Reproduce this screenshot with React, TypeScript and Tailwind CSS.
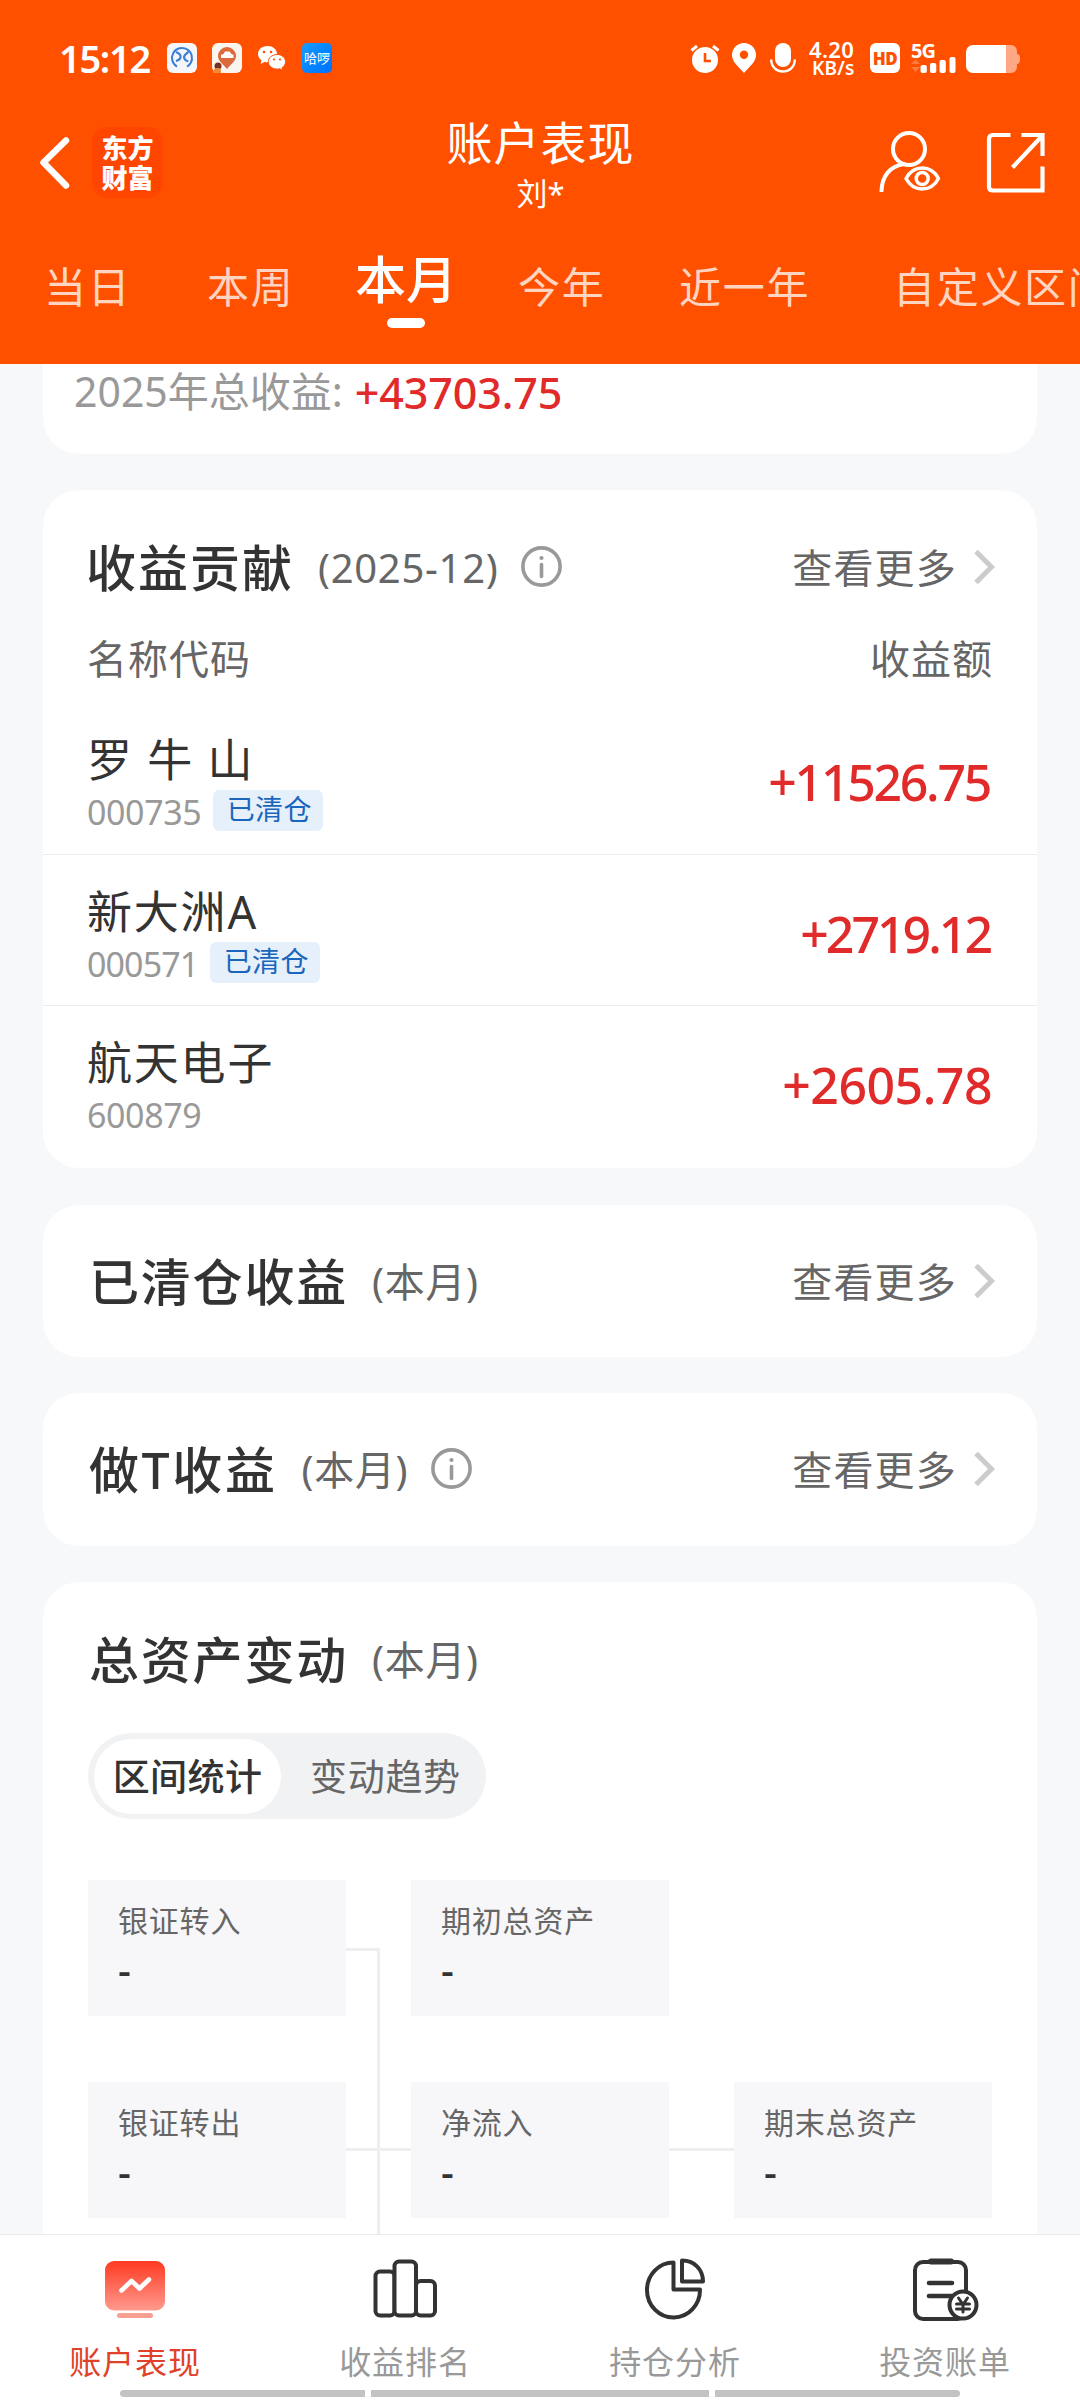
import React from "react";

function Tab({ label, className = "" }: { label: string; className?: string }) {
  return (
    <span className={`shrink-0 whitespace-nowrap text-[42px] leading-none tracking-[1.7px] text-[#ffd5c2] ${className}`}>
      {label}
    </span>
  );
}

function Info({ className = "" }: { className?: string }) {
  return (
    <svg className={`h-[41px] w-[41px] shrink-0 ${className}`} viewBox="0 0 41 41" fill="none" stroke="#999">
      <circle cx="20.5" cy="20.5" r="18.6" strokeWidth="3.6" />
      <path d="M20.5 18.5v12" strokeWidth="3.6" strokeLinecap="round" />
      <circle cx="20.5" cy="12" r="2.1" fill="#999" stroke="none" />
    </svg>
  );
}

function More() {
  return (
    <div className="-mt-[1px] flex items-center">
      <span className="text-[40px] leading-none tracking-[1.2px] text-[#666]">查看更多</span>
      <svg className="-mt-[2px] ml-[16px] h-[36px] w-[24px]" viewBox="0 0 24 36" fill="none" stroke="#ccc" strokeWidth="5">
        <path d="M3 2.5 18.5 18 3 33.5" />
      </svg>
    </div>
  );
}

function Heading({
  title,
  sub,
  info,
  more = true,
  className = "pl-[46px]",
  titleClass = "tracking-[1.8px]",
}: {
  title: string;
  sub: string;
  info?: boolean;
  more?: boolean;
  className?: string;
  titleClass?: string;
}) {
  return (
    <div className={`flex h-[50px] items-center justify-between pr-[40px] ${className}`}>
      <div className="flex items-center">
        <span className={`text-[50px] font-medium leading-none text-[#333] ${titleClass}`}>{title}</span>
        <span className="ml-[24px] text-[40px] leading-none tracking-[0.7px] text-[#666]">{sub}</span>
        {info && <Info className="-mt-[3px] ml-[23px]" />}
      </div>
      {more && <More />}
    </div>
  );
}

function Stock({
  name,
  code,
  cleared,
  amount,
  last,
  codeClass = "tracking-[-0.4px]",
  amountClass,
}: {
  name: string;
  code: string;
  cleared?: boolean;
  amount: string;
  last?: boolean;
  codeClass?: string;
  amountClass: string;
}) {
  return (
    <div className={`flex h-[151.5px] items-start justify-between pl-[44px] pr-[44px] ${last ? "" : "border-b-[1.5px] border-[#ececee]"}`}>
      <div className="pt-[34px]">
        <div className="whitespace-pre text-[45px] leading-none tracking-[1.8px] text-[#333]">{name}</div>
        <div className="mt-[8px] flex h-[41px] items-center">
          <span className={`mt-[3px] text-[34px] leading-none text-[#999] ${codeClass}`}>{code}</span>
          {cleared && (
            <span className="ml-[12px] flex h-[41px] w-[110px] items-center justify-center rounded-[6px] bg-[#e5f0fb] pb-[3px] pl-[2px] text-[28px] leading-none tracking-[0.4px] text-[#1b66bd]">
              已清仓
            </span>
          )}
        </div>
      </div>
      <span className={`mt-[54px] text-[50px] font-medium leading-none text-[#e12a2a] ${amountClass}`}>{amount}</span>
    </div>
  );
}

function Box({ label, className = "" }: { label: string; className?: string }) {
  return (
    <div className={`h-[136px] w-[258px] bg-[#f7f7f9] pl-[30px] pt-[26px] ${className}`}>
      <div className="text-[30px] leading-none tracking-[0.8px] text-[#666]">{label}</div>
      <div className="mt-[14px] text-[40px] font-medium leading-none text-[#333]">-</div>
    </div>
  );
}

function NavItem({ label, active, children }: { label: string; active?: boolean; children: React.ReactNode }) {
  return (
    <div className="flex w-[270px] flex-col items-center pt-[17px]">
      {children}
      <span className={`mt-[18px] text-[32px] leading-none tracking-[0.9px] ${active ? "text-[#e04128]" : "text-[#999]"}`}>{label}</span>
    </div>
  );
}

export default function App() {
  return (
    <div className="flex h-[2400px] w-[1080px] flex-col overflow-hidden bg-[#f7f8fa] font-['Noto_Sans','Noto_Sans_CJK_SC',sans-serif]">
      <header className="h-[364px] shrink-0 bg-[#ff5000] text-white">
        {/* status bar */}
        <div className="flex h-[116px] items-center pl-[59px]">
          <span className="w-[108px] text-[38px] font-semibold leading-none tracking-[-1.3px]">15:12</span>
          <svg className="h-[30px] w-[30px]" viewBox="0 0 30 30" fill="none">
            <rect width="30" height="30" rx="6" fill="#f4f6fb" />
            <circle cx="15" cy="15" r="10" stroke="#3b7fd6" strokeWidth="2" strokeDasharray="52 11" transform="rotate(120 15 15)" />
            <path d="M9 9c4 1.500 5 3.500 4.500 5.500S11 17.500 9 18M21.500 9c-4 2.500-5 4.500-4.200 6.500.6 1.600 2 2.500 4 3" stroke="#3b7fd6" strokeWidth="2.200" />
          </svg>
          <svg className="ml-[15px] h-[30px] w-[30px]" viewBox="0 0 30 30">
            <rect width="30" height="30" rx="6" fill="#fbf5f0" />
            <path d="M15 4a9 9 0 0 0-9 9c0 5 5 8 9 13 4-5 9-8 9-13a9 9 0 0 0-9-9Z" fill="#dd6a3c" />
            <path d="M9 15v-3l2.500-1L13 8.500h4.500l2 2.500 2 1v3Z" fill="#fff" />
            <circle cx="6" cy="23" r="3.500" fill="#7a3320" />
            <path d="M1 30c0-4 2-5 5-5s3 2 3 5Z" fill="#ee8a3a" />
          </svg>
          <svg className="ml-[15px] h-[26px] w-[30px]" viewBox="0 0 30 26">
            <path d="M10.500 1C5 1 1 4.600 1 9c0 2.600 1.300 4.800 3.500 6.200L3.600 19l3.900-2.100c1 .2 2 .3 3 .3 5.400 0 9.500-3.600 9.500-8.200S15.900 1 10.500 1Z" fill="#fff" />
            <path d="M20 9.500c-4.800 0-8.700 3.200-8.700 7.300s3.900 7.300 8.700 7.300c1 0 1.900-.1 2.700-.4l3.200 1.800-.8-2.900c2.100-1.300 3.500-3.400 3.500-5.800 0-4.100-3.800-7.300-8.600-7.300Z" fill="#fff" stroke="#ff5000" strokeWidth="1" />
            <g fill="#ff5000">
              <circle cx="7" cy="7" r="1.300" />
              <circle cx="14" cy="7" r="1.300" />
              <circle cx="17" cy="14.500" r="1.100" />
              <circle cx="23" cy="14.500" r="1.100" />
            </g>
          </svg>
          <span className="ml-[15px] flex h-[30px] w-[30px] items-center justify-center rounded-[5px] bg-gradient-to-br from-[#1a9bff] to-[#0070ff] text-[13px] leading-none">
            哈啰
          </span>
          <svg className="ml-[358px] h-[30px] w-[30px]" viewBox="0 0 30 30">
            <circle cx="15" cy="17" r="13" fill="#fff" />
            <path d="M1.500 7.500 7 3M28.500 7.500 23 3" stroke="#fff" strokeWidth="3" />
            <path d="M15 10v8h6" stroke="#ff5000" strokeWidth="2.600" fill="none" />
          </svg>
          <svg className="ml-[12px] h-[30px] w-[24px]" viewBox="0 0 24 30">
            <path fillRule="evenodd" d="M12 0A12 12 0 0 0 0 12c0 7 6 11 12 18 6-7 12-11 12-18A12 12 0 0 0 12 0Zm0 7.500a4.200 4.200 0 1 1 0 8.400 4.200 4.200 0 0 1 0-8.400Z" fill="#fff" />
          </svg>
          <svg className="ml-[14px] h-[30px] w-[26px]" viewBox="0 0 26 30">
            <rect x="5" y="0" width="16" height="24" rx="8" fill="#fff" />
            <path d="M1.200 16.500c0 7 5 12 11.800 12s11.800-5 11.800-12" stroke="#fff" strokeWidth="2.400" fill="none" />
          </svg>
          <div className="ml-[13px] flex w-[61px] flex-col items-start">
            <span className="text-[22px] font-semibold leading-[20px] tracking-[0.3px]">4.20</span>
            <span className="pl-[3px] text-[19px] font-semibold leading-[19px] tracking-[0.2px]">KB/s</span>
          </div>
          <span className="flex h-[30px] w-[30px] items-center justify-center rounded-[6px] bg-white text-[17px] font-black leading-none tracking-[-0.5px] text-[#ff5000]">
            HD
          </span>
          <div className="ml-[11px] flex h-[30px] w-[45px] flex-col">
            <span className="text-[20px] font-bold leading-[15px] tracking-[-1px]">5G</span>
            <svg className="-mt-[1px] h-[16px] w-[45px] shrink-0" viewBox="0 0 45 16" fill="#fff">
              <path d="M0 7 4.500 2 9 7ZM0 10h9l-4.500 5Z" fill="#ff7a3c" />
              <rect x="9.500" y="8" width="6.300" height="8" rx="2" />
              <rect x="19" y="6" width="6.300" height="10" rx="2" />
              <rect x="28.500" y="3" width="6.300" height="13" rx="2" />
              <rect x="38.500" y="0" width="6" height="16" rx="2" />
            </svg>
          </div>
          <svg className="ml-[10px] mt-[2px] h-[28px] w-[54px]" viewBox="0 0 54 28">
            <path d="M40 0h5a6 6 0 0 1 6 6v3q3 0 3 5t-3 5v3a6 6 0 0 1-6 6h-5Z" fill="#ffa883" />
            <path d="M40 0H7a7 7 0 0 0-7 7v14a7 7 0 0 0 7 7h33Z" fill="#fff" />
          </svg>
        </div>

        {/* title bar */}
        <div className="flex h-[94px] items-start justify-between pl-[38px] pr-[35px]">
          <div className="flex w-[280px] items-center pt-[11px]">
            <svg className="h-[54px] w-[32px]" viewBox="0 0 32 54" fill="none" stroke="#fff" strokeWidth="6.500" strokeLinecap="round" strokeLinejoin="round">
              <path d="M28 4.500 5.500 26.500 28 49.500" />
            </svg>
            <div className="ml-[22px] flex h-[71px] w-[71px] flex-col items-center justify-center rounded-[15px] bg-[#ff4600] text-[26px] font-black leading-[30px]">
              <span>东方</span>
              <span>财富</span>
            </div>
          </div>
          <div className="flex flex-col items-center pr-[2px] pt-[3px]">
            <span className="text-[46px] leading-none tracking-[1px]">账户表现</span>
            <span className="mt-[13px] text-[31px] leading-none">刘*</span>
          </div>
          <div className="flex w-[280px] justify-end pt-[14px]">
            <svg className="h-[62px] w-[64px]" viewBox="0 0 64 62" fill="none" stroke="#fff" strokeWidth="4">
              <circle cx="32" cy="19" r="16" />
              <path d="M4.500 61C5 46 13 36 27 34" strokeLinecap="round" />
              <path d="M29 48.500c7.500-14 25-14 32.500 0-7.500 14-25 14-32.500 0Z" strokeWidth="3.500" strokeLinejoin="round" />
              <circle cx="45.200" cy="48.500" r="6" strokeWidth="3.500" />
            </svg>
            <svg className="ml-[44px] mt-[1px] h-[62px] w-[60px]" viewBox="0 0 60 62" fill="none" stroke="#fff" strokeWidth="4.200">
              <path d="M25.500 4H8Q4 4 4 8V56q0 3.500 4 3.500H57.500V35.500M36.500 4h21v21M27.500 36.500 57 5" />
            </svg>
          </div>
        </div>

        {/* period tabs */}
        <div className="flex h-[154px] items-start overflow-hidden pl-[44px]">
          <Tab label="当日" className="mt-[56px] w-[163px]" />
          <Tab label="本周" className="mt-[56px] w-[148px]" />
          <div className="flex w-[102px] shrink-0 flex-col items-center pt-[44px]">
            <span className="whitespace-nowrap text-[51px] font-medium leading-none">本月</span>
            <span className="mt-[13px] h-[10px] w-[38px] rounded-full bg-white" />
          </div>
          <Tab label="今年" className="ml-[61px] mt-[56px] w-[161px]" />
          <Tab label="近一年" className="mt-[56px] w-[214px]" />
          <Tab label="自定义区间" className="mt-[56px]" />
        </div>
      </header>

      <main className="h-[1870px] shrink-0 overflow-hidden px-[43px]">
        <section className="flex h-[90px] items-start rounded-b-[36px] bg-white pl-[31px] pt-[7px]">
          <span className="text-[41px] leading-none text-[#999]">2025年总收益:</span>
          <span className="ml-[12px] text-[43px] font-medium leading-none tracking-[-0.1px] text-[#e12a2a]">+43703.75</span>
        </section>

        <section className="mt-[36px] h-[678px] rounded-[36px] bg-white pt-[53px]">
          <Heading title="收益贡献" sub="(2025-12)" info className="pl-[43px]" titleClass="tracking-[2px]" />
          <div className="mt-[46px] flex justify-between px-[44px] text-[40px] leading-none tracking-[1px] text-[#666]">
            <span>名称代码</span>
            <span>收益额</span>
          </div>
          <div className="mt-[24px]">
            <Stock name="罗 牛 山" code="000735" cleared amount="+11526.75" amountClass="mr-[3px] tracking-[-2.3px]" />
            <Stock name="新大洲A" code="000571" codeClass="tracking-[-0.9px]" cleared amount="+2719.12" amountClass="mr-[3px] tracking-[-3px]" />
            <Stock name="航天电子" code="600879" amount="+2605.78" amountClass="mr-[1px] tracking-[-0.5px]" last />
          </div>
        </section>

        <section className="mt-[37px] h-[152px] rounded-[36px] bg-white pt-[52px]">
          <Heading title="已清仓收益" sub="(本月)" />
        </section>

        <section className="mt-[36px] h-[153px] rounded-[36px] bg-white pt-[52px]">
          <Heading title="做T收益" sub="(本月)" info titleClass="tracking-[2.6px]" />
        </section>

        <section className="mt-[36px] h-[700px] rounded-t-[36px] bg-white pt-[53px]">
          <Heading title="总资产变动" sub="(本月)" more={false} />
          <div className="ml-[45px] mt-[48px] flex h-[86px] w-[398px] items-center rounded-full bg-[#f1f2f4] p-[6px] text-[37px] leading-none">
            <span className="flex h-[75px] w-[187px] items-center justify-center rounded-full bg-white font-medium tracking-[0.4px] text-[#333]">区间统计</span>
            <span className="ml-[29px] tracking-[0.7px] text-[#666]">变动趋势</span>
          </div>
          <div className="ml-[45px] mt-[61px] grid grid-cols-[258px_65px_258px_65px_258px]">
            <Box label="银证转入" />
            <div className="h-[202px] pt-[68px]">
              <div className="h-[134px] w-[34px] border-r-[3px] border-t-[3px] border-[#eee]" />
            </div>
            <Box label="期初总资产" />
            <div />
            <div />
            <Box label="银证转出" />
            <div className="relative h-[170px] w-[34px] border-r-[3px] border-[#eee]">
              <div className="absolute left-0 top-[66px] h-[3px] w-[65px] bg-[#eee]" />
            </div>
            <Box label="净流入" />
            <div className="pt-[66px]">
              <div className="h-[3px] bg-[#eee]" />
            </div>
            <Box label="期末总资产" />
          </div>
        </section>
      </main>

      <nav className="flex h-[166px] shrink-0 flex-col border-t border-[#ebebed] bg-white">
        <div className="flex h-[155px]">
          <NavItem label="账户表现" active>
            <svg className="h-[76px] w-[80px]" viewBox="0 0 80 76" fill="none">
              <defs>
                <linearGradient id="screen" x1="0" y1="0" x2="0" y2="1">
                  <stop offset="0" stopColor="#ff3a22" />
                  <stop offset="1" stopColor="#ff9a8e" />
                </linearGradient>
              </defs>
              <rect x="10" y="9" width="60" height="49.500" rx="9" fill="url(#screen)" />
              <path d="m26.500 38.500 10-9.500 8 7.500 9.500-9" stroke="#fff" strokeWidth="4.600" strokeLinecap="round" strokeLinejoin="round" />
              <rect x="22" y="61" width="36" height="5" rx="2.500" fill="#f9a093" />
            </svg>
          </NavItem>
          <NavItem label="收益排名">
            <svg className="h-[76px] w-[80px]" viewBox="0 0 80 76" fill="none" stroke="#333" strokeWidth="4">
              <rect x="10.500" y="19.500" width="19" height="44" rx="4.500" />
              <rect x="29.500" y="9.500" width="21.500" height="54" rx="4.500" fill="#fff" />
              <rect x="51" y="29" width="19" height="34.500" rx="4.500" />
            </svg>
          </NavItem>
          <NavItem label="持仓分析">
            <svg className="h-[76px] w-[80px]" viewBox="0 0 80 76" fill="none" stroke="#333" strokeWidth="4" strokeLinejoin="round">
              <path d="M38.500 10.500A26.500 27.500 0 1 0 65 37.500H38.500Z" />
              <path d="M47 8.500V29.500H68C68 17 59 8.500 47 8.500Z" />
            </svg>
          </NavItem>
          <NavItem label="投资账单">
            <svg className="h-[76px] w-[80px]" viewBox="0 0 80 76" fill="none" stroke="#333" strokeWidth="4" strokeLinecap="round">
              <rect x="10" y="10" width="51" height="57" rx="8" />
              <path d="M26 9.500h20" strokeWidth="6" />
              <path d="M24 31h23M24 44h23" strokeWidth="4.600" />
              <circle cx="58" cy="53" r="13.500" fill="#fff" />
              <path d="m53.500 46 4.500 6.500 4.500-6.500M58 52.500V60M51.500 52h13M51.500 57h13" strokeWidth="3" />
            </svg>
          </NavItem>
        </div>
        <div className="ml-[120px] flex h-[7px] w-[840px] gap-[6px] overflow-hidden rounded-full">
          <span className="w-[245px] bg-[#c3c3c3]" />
          <span className="flex-1 bg-[#c3c3c3]" />
          <span className="w-[245px] bg-[#c3c3c3]" />
        </div>
      </nav>
    </div>
  );
}
